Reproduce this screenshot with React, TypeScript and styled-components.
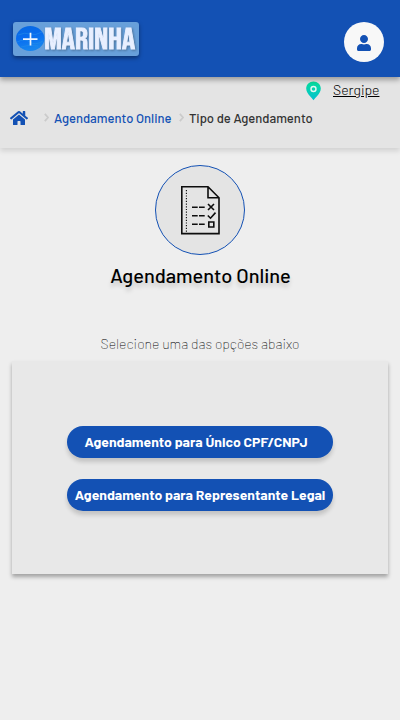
import React from "react";
import styled, { createGlobalStyle } from "styled-components";
import { FaHome, FaUser } from "react-icons/fa";

const GlobalStyle = createGlobalStyle`
  * { box-sizing: border-box; }
  body {
    margin: 0;
    background: #eeeeee;
    font-family: Barlow, Roboto, "Liberation Sans", sans-serif;
  }
`;

const Page = styled.div`
  min-height: 720px;
  background: #eeeeee;
`;

const Header = styled.header`
  position: relative;
  height: 77px;
  padding: 22px 16px 0 13px;
  display: flex;
  justify-content: space-between;
  align-items: flex-start;
  background: #1351b4;
  box-shadow: 0 3px 5px rgba(0, 0, 0, 0.32);
`;

const Logo = styled.div`
  width: 126px;
  height: 34px;
  border-radius: 3px;
  background: #68a0da;
  box-shadow: 0 2px 4px rgba(0, 0, 0, 0.4);
  svg { display: block; overflow: visible; }
`;

const Wordmark = styled.text`
  font-family: "Bebas Neue", Roboto, sans-serif;
  font-weight: 400;
  font-size: 30px;
  fill: #e8efff;
  stroke: #e8efff;
  stroke-width: 0.8px;
  filter: drop-shadow(1px 1px 1px rgba(0, 0, 0, 0.3));
`;

const Avatar = styled.button`
  width: 40px;
  height: 40px;
  padding: 0;
  border: 0;
  border-radius: 50%;
  display: grid;
  place-items: center;
  background: #f8f8f8;
  color: #1351b4;
  svg { margin-top: 2px; }
`;

const SubBar = styled.div`
  height: 71px;
  background: #e4e4e4;
  box-shadow: 0 3px 5px rgba(0, 0, 0, 0.12);
`;

const Location = styled.div`
  height: 27px;
  padding: 4px 20px 0 306px;
  display: flex;
  align-items: flex-start;
  gap: 12px;
`;

const Region = styled.a`
  font-size: 14px;
  line-height: 17px;
  font-weight: 300;
  color: #000;
  text-decoration: underline;
`;

const Crumbs = styled.nav`
  height: 28px;
  padding-left: 10px;
  display: flex;
  align-items: center;
  color: #1351b4;
`;

const Chevron = styled.svg<{ $before: number }>`
  margin: 0 5px 2px ${(p) => p.$before}px;
  flex: none;
`;

const Crumb = styled.span<{ $current?: boolean; $width: number }>`
  width: ${(p) => p.$width}px;
  font-size: 13px;
  line-height: 18px;
  font-weight: 500;
  white-space: nowrap;
  color: ${(p) => (p.$current ? "#333" : "#1351b4")};
`;

const Main = styled.main`
  display: flex;
  flex-direction: column;
  align-items: center;
  padding: 17px 12px 0;
`;

const IconDisc = styled.div`
  width: 90px;
  height: 90px;
  border: 1px solid #1351b4;
  border-radius: 50%;
  display: grid;
  place-items: center;
  background: #e4e4e4;
`;

const Title = styled.h1`
  margin: 8px 0 0;
  padding-left: 1px;
  font-size: 20px;
  line-height: 24px;
  font-weight: 500;
  color: #000;
  text-shadow: 0 4px 4px rgba(0, 0, 0, 0.17);
`;

const Hint = styled.p`
  margin: 48px 0 0;
  height: 26px;
  font-size: 14px;
  line-height: 18px;
  font-weight: 200;
  color: #000;
`;

const Panel = styled.section`
  width: 376px;
  height: 213px;
  padding-top: 65px;
  display: flex;
  flex-direction: column;
  align-items: center;
  gap: 21px;
  background: #e8e8e8;
  box-shadow: 0 3px 4px rgba(0, 0, 0, 0.32);
`;

const Option = styled.button<{ $inset?: number }>`
  width: 266px;
  height: 32px;
  padding: 0 ${(p) => p.$inset ?? 0}px 0 0;
  border: 0;
  border-radius: 16px;
  background: #1351b4;
  color: #fff;
  font: 700 14px/32px Barlow, Roboto, "Liberation Sans", sans-serif;
  white-space: nowrap;
  box-shadow: 0 4px 4px rgba(0, 0, 0, 0.16);
`;

const MarinhaLogo = () => (
  <svg width="126" height="34" viewBox="0 0 126 34">
    <defs>
      <linearGradient id="sea" x1="0" y1="0" x2="0.3" y2="1">
        <stop offset="0" stopColor="#0868df" />
        <stop offset="0.5" stopColor="#086cf0" />
        <stop offset="1" stopColor="#1685ef" />
      </linearGradient>
    </defs>
    <ellipse cx="17.2" cy="16.5" rx="14.2" ry="12.4" fill="url(#sea)" />
    <path d="M5 13q7-3 12-1t12-2M4 20q8-4 13 0t13-1M8 25q8-3 17-1" fill="none" stroke="#248de8" strokeWidth="1" opacity="0.6" />
    <path d="M10 17.1h14.5M17.5 10.8v12.6" stroke="#eef5ff" strokeWidth="1.7" />
    <Wordmark x="31.2" y="27" textLength="91" lengthAdjust="spacingAndGlyphs">
      MARINHA
    </Wordmark>
  </svg>
);

const Pin = () => (
  <svg width="15" height="20" viewBox="0 0 15 20">
    <defs>
      <linearGradient id="pin" x1="0" y1="0" x2="0" y2="1">
        <stop offset="0" stopColor="#06df9c" />
        <stop offset="1" stopColor="#04bfd0" />
      </linearGradient>
    </defs>
    <path d="M7.5.5C3.5.5.2 3.6.2 7.6c0 3.2 2 5.7 4.1 8 .9.9 1.8 1.9 3.2 3.6 1.4-1.7 2.3-2.7 3.2-3.6 2.1-2.3 4.1-4.8 4.1-8C14.8 3.6 11.5.5 7.5.5Z" fill="url(#pin)" />
    <circle cx="7.5" cy="8" r="2.5" fill="none" stroke="#e2f8f2" strokeWidth="1.4" />
  </svg>
);

const Separator = ({ before }: { before: number }) => (
  <Chevron $before={before} width="5" height="9" viewBox="0 0 5 9">
    <path d="M.8.9 4.1 4.5.8 8.1" fill="none" stroke="#cbcbcb" strokeWidth="1.8" />
  </Chevron>
);

const Checklist = () => (
  <svg width="40" height="50" viewBox="0 0 40 50" fill="none" stroke="#0d0d0d" strokeWidth="1.6">
    <path d="M1.8 1.8H28L39 12.8V48.6H1.8ZM28 1.8V12.8H39" />
    <path d="M6.4 5V47" strokeWidth="1.1" strokeDasharray="1.2 1.5" />
    <path d="M12 22.2h5.7M19 22.2h5.7M12 30.7h5.7M19 30.7h5.7M12 39.3h5.7M19 39.3h5.7" />
    <path d="m28 19 6 6m0-6-6 6M27.8 30.5l2.7 2.7 5-5.6M28.8 37h5v5h-5Z" />
  </svg>
);

export default function App() {
  return (
    <Page>
      <GlobalStyle />
      <Header>
        <Logo><MarinhaLogo /></Logo>
        <Avatar aria-label="Usuário"><FaUser size={16} /></Avatar>
      </Header>
      <SubBar>
        <Location>
          <Pin />
          <Region>Sergipe</Region>
        </Location>
        <Crumbs>
          <FaHome size={18} />
          <Separator before={16} />
          <Crumb $width={118}>Agendamento Online</Crumb>
          <Separator before={7} />
          <Crumb $current $width={125}>Tipo de Agendamento</Crumb>
        </Crumbs>
      </SubBar>
      <Main>
        <IconDisc><Checklist /></IconDisc>
        <Title>Agendamento Online</Title>
        <Hint>Selecione uma das opções abaixo</Hint>
        <Panel>
          <Option $inset={8}>Agendamento para Único CPF/CNPJ</Option>
          <Option>Agendamento para Representante Legal</Option>
        </Panel>
      </Main>
    </Page>
  );
}
